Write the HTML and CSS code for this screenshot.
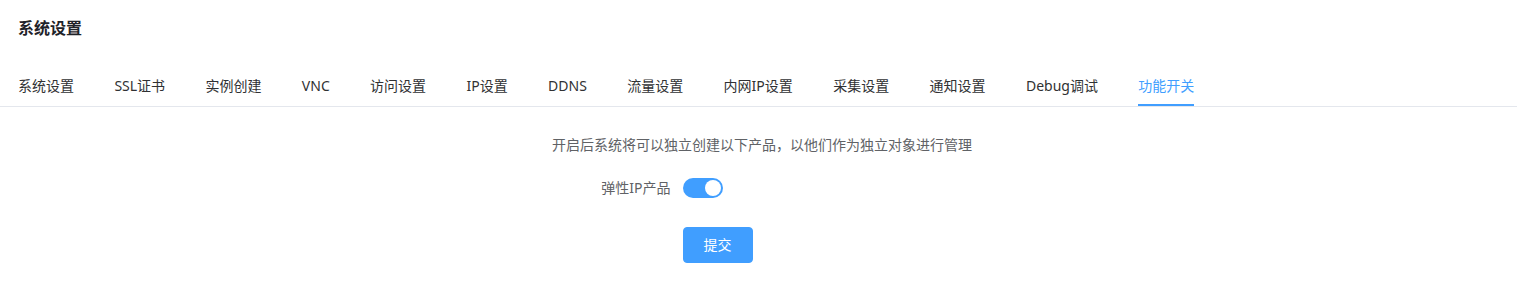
FILE: index.html
```html
<!DOCTYPE html>
<html lang="zh-CN">
<head>
  <meta charset="UTF-8">
  <meta name="viewport" content="width=device-width, initial-scale=1.0">
  <title>系统设置</title>
  <link rel="stylesheet" href="styles.css">
</head>
<body>
  <h1 class="page-title">系统设置</h1>
  <div class="tabs">
    <div class="tab">系统设置</div>
    <div class="tab">SSL证书</div>
    <div class="tab">实例创建</div>
    <div class="tab">VNC</div>
    <div class="tab">访问设置</div>
    <div class="tab">IP设置</div>
    <div class="tab">DDNS</div>
    <div class="tab">流量设置</div>
    <div class="tab">内网IP设置</div>
    <div class="tab">采集设置</div>
    <div class="tab">通知设置</div>
    <div class="tab">Debug调试</div>
    <div class="tab active">功能开关</div>
  </div>

  <div class="panel">
    <p class="tip">开启后系统将可以独立创建以下产品，以他们作为独立对象进行管理</p>
    <form class="form" onsubmit="return false">
      <div class="form-item">
        <label class="form-label">弹性IP产品</label>
        <div class="form-content">
          <span class="switch on" onclick="this.classList.toggle('on')"><span class="switch-dot"></span></span>
        </div>
      </div>
      <div class="form-item">
        <label class="form-label"></label>
        <div class="form-content">
          <button class="submit-button">提交</button>
        </div>
      </div>
    </form>
  </div>
</body>
</html>
```

FILE: styles.css
```css
body {
  font-family: "Noto Sans", "Noto Sans CJK SC", sans-serif;
  margin: 0;
  background-color: #ffffff;
  color: #303133;
}

.page-title {
  margin: 0;
  padding: 16px 18px 0;
  font-size: 16px;
  line-height: 24px;
  font-weight: bold;
  color: #1f2329;
}

.tabs {
  display: flex;
  margin-top: 26px;
  padding-left: 18px;
  border-bottom: 1px solid #e4e7ed;
}

.tab {
  position: relative;
  padding: 0 20.2px;
  height: 40px;
  line-height: 40px;
  font-size: 14px;
  color: #303133;
  cursor: pointer;
}

.tab:first-child {
  padding-left: 0;
}

.tab.active {
  color: #409eff;
}

.tab.active::after {
  content: "";
  position: absolute;
  left: 0;
  bottom: 0;
  width: 100%;
  height: 2px;
  background-color: #409eff;
}

.tab.active:not(:first-child)::after {
  left: 20.2px;
  width: calc(100% - 40.4px);
}

.panel {
  padding-top: 28px;
}

.tip {
  margin: 0;
  text-align: center;
  font-size: 14px;
  line-height: 20px;
  color: #606266;
  padding-left: 7px;
}

.form {
  width: 400px;
  margin: 12px auto 0;
}

.form-item {
  display: flex;
  align-items: center;
  min-height: 40px;
  margin-bottom: 18px;
}

.form-label {
  width: 124px;
  box-sizing: border-box;
  padding-right: 12px;
  text-align: right;
  font-size: 14px;
  color: #606266;
}

.switch {
  display: inline-block;
  position: relative;
  width: 40px;
  height: 20px;
  border-radius: 10px;
  background-color: #dcdfe6;
  vertical-align: middle;
  cursor: pointer;
  transition: background-color 0.3s;
}

.switch.on {
  background-color: #409eff;
}

.switch-dot {
  position: absolute;
  top: 2px;
  left: 2px;
  width: 16px;
  height: 16px;
  border-radius: 50%;
  background-color: #ffffff;
  transition: left 0.3s;
}

.switch.on .switch-dot {
  left: 22px;
}

.submit-button {
  padding: 10px 20px;
  font-family: inherit;
  font-size: 14px;
  line-height: 14px;
  color: #ffffff;
  background-color: #409eff;
  border: 1px solid #409eff;
  border-radius: 4px;
  cursor: pointer;
}

.submit-button:hover {
  background-color: #66b1ff;
}
```
